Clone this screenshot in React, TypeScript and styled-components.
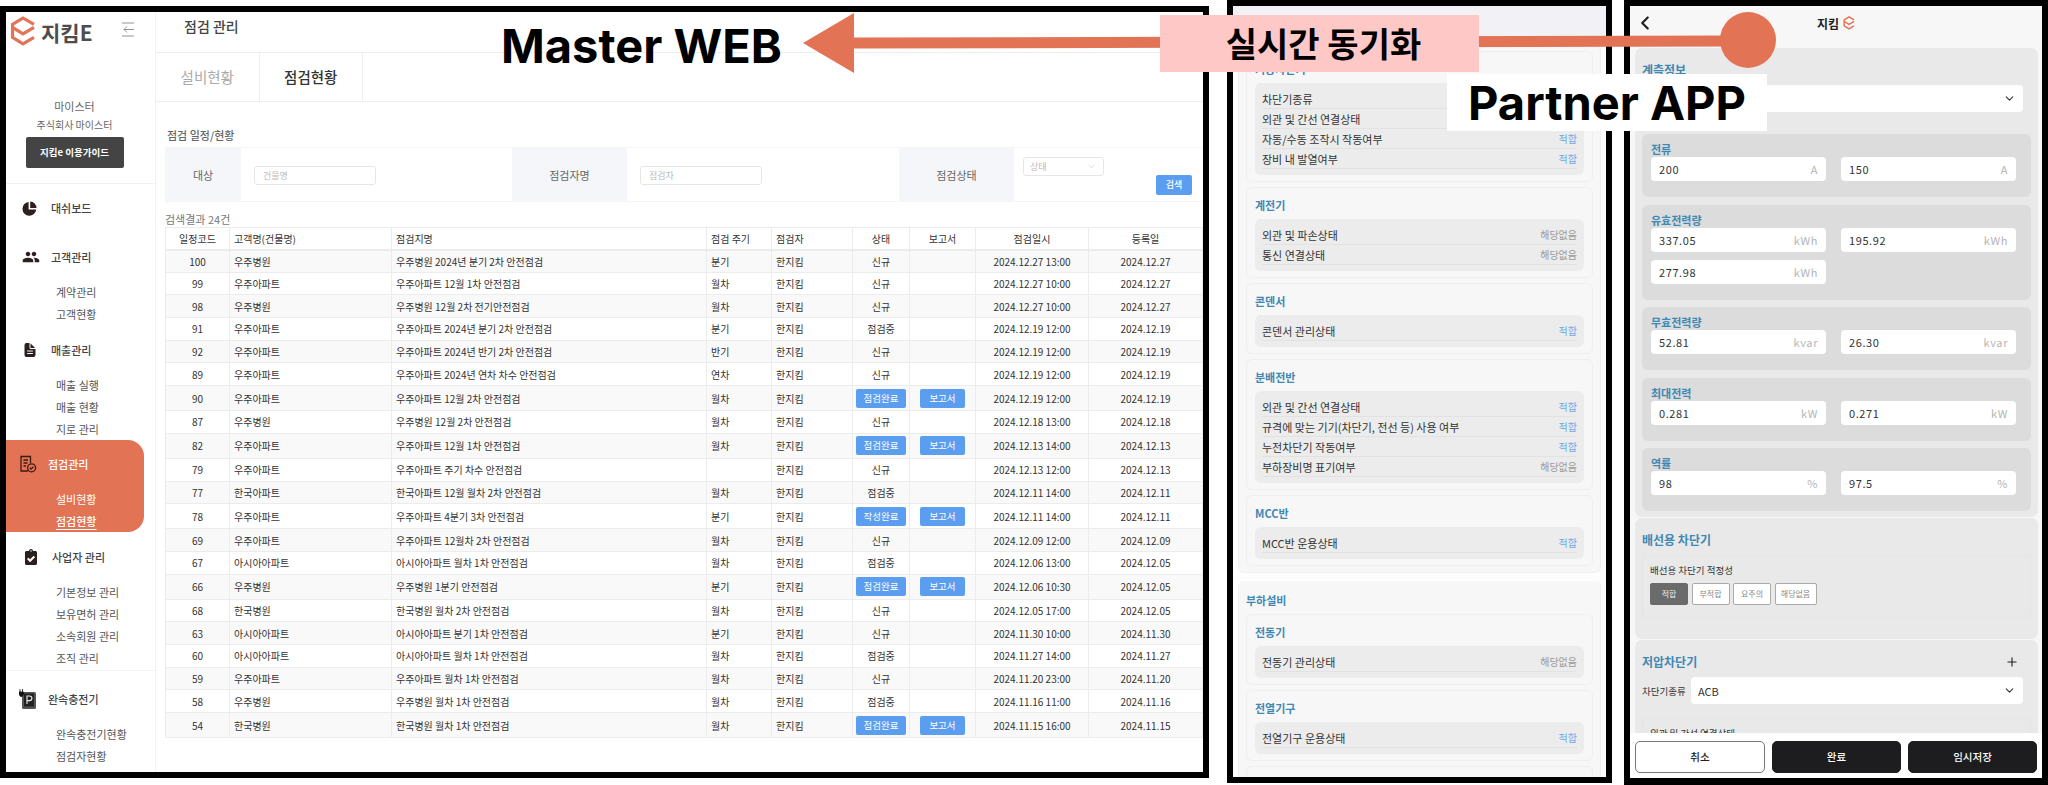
import styled, { createGlobalStyle } from "styled-components";
import { ChevronDown, ChevronLeft, Plus } from "lucide-react";
import { FaClipboardCheck } from "react-icons/fa";
import { IoDocumentText } from "react-icons/io5";
import { MdPeople } from "react-icons/md";

const KR = `"Noto Sans CJK KR", "Noto Sans", sans-serif`;

const GlobalStyle = createGlobalStyle`
  html, body {
    margin: 0;
    padding: 0;
    background: #fff;
  }
  * {
    box-sizing: border-box;
  }
  body {
    font-family: ${KR};
    color: #333;
  }
`;

const ORANGE = "#e37355";

const Logo = ({ size = 26 }: { size?: number }) => (
  <svg width={size} height={size * 1.15} viewBox="0 0 26 30" fill="none" stroke={ORANGE} strokeWidth="3.2">
    <path d="M24 8.5 13 2 2.5 8.5v13L13 28l11-6.5" />
    <path d="M2.5 11.5 13 18l11-6.5" />
  </svg>
);

const CollapseIcon = () => (
  <svg width="14" height="15" viewBox="0 0 14 15" fill="none" stroke="#777" strokeWidth="0.8">
    <path d="M1 1h12M1 14h12M13 7.5H3M6 4.5 3 7.5l3 3" />
  </svg>
);

const PieIcon = () => (
  <svg width="15" height="15" viewBox="0 0 15 15" fill="#2b1f1f">
    <path d="M6.6 1v7.6h7.6A6.9 6.9 0 1 1 6.6 1Z" />
    <path d="M8.2.6a6.6 6.6 0 0 1 6.3 6.4H8.2Z" />
  </svg>
);

const InspectIcon = () => (
  <svg width="18" height="18" viewBox="0 0 18 18" fill="none" stroke="#3a1c14" strokeWidth="1.3">
    <path d="M9 16H2V1.5h9.5V8" />
    <path d="M4.5 5h4.5M4.5 8h4M4.5 11h2.5" />
    <circle cx="12.6" cy="12.8" r="4" />
    <path d="m10.8 12.8 1.3 1.3 2.2-2.3" />
  </svg>
);

const ChargerIcon = () => (
  <svg width="17" height="20" viewBox="0 0 17 20">
    <rect x="3" y="3" width="14" height="17" rx="1.5" fill="#555" />
    <rect x="5" y="4.5" width="10" height="13" fill="#222" />
    <path d="M1 0v3M3.5 0v3M0 3h4.5v2.5L2.2 8 0 5.5Z" fill="#111" stroke="#111" strokeWidth=".8" />
    <path d="M8 15V7h2.6a2.2 2.2 0 0 1 0 4.6H8" fill="none" stroke="#eee" strokeWidth="1.1" />
  </svg>
);

const Stage = styled.div`
  position: relative;
  display: flex;
  align-items: flex-start;
  width: 2048px;
  height: 785px;
  overflow: hidden;
  background: #fff;
`;

const WebFrame = styled.div`
  display: flex;
  flex: none;
  width: 1209px;
  height: 772px;
  margin-top: 6px;
  border: 6px solid #000;
  background: #fff;
  overflow: hidden;
`;

const Sidebar = styled.aside`
  flex: none;
  width: 150px;
  height: 100%;
  border-right: 1px solid #f3f3f3;
`;

const Brand = styled.div`
  display: flex;
  align-items: flex-start;
  height: 50px;
  padding: 4px 0 0 4px;
`;

const BrandName = styled.span`
  margin-left: 5px;
  margin-top: 1px;
  font-size: 21px;
  line-height: 30px;
  font-weight: 700;
  color: #4d4d4d;
`;

const CollapseButton = styled.span`
  margin-left: auto;
  margin-right: 20px;
  margin-top: 2px;
`;

const UserBlock = styled.div`
  display: flex;
  flex-direction: column;
  align-items: center;
  padding: 36px 32px 15px 20px;
  border-bottom: 1px solid #f1f1f1;
`;

const UserName = styled.div`
  font-size: 11px;
  line-height: 16px;
  color: #666;
`;

const UserCompany = styled.div`
  margin-top: 3px;
  font-size: 10px;
  line-height: 16px;
  color: #666;
`;

const GuideButton = styled.div`
  flex: none;
  width: 98px;
  height: 31px;
  margin-top: 4px;
  border-radius: 2px;
  background: #444;
  color: #fff;
  font-size: 9.5px;
  font-weight: 700;
  line-height: 30px;
  text-align: center;
`;

const NavGroup = styled.div<{ $top: number; $active?: boolean; $divided?: boolean }>`
  margin-top: ${(p) => p.$top}px;
  width: ${(p) => (p.$active ? "138px" : "auto")};
  padding: ${(p) => (p.$active ? "12px 0 0" : "0")};
  padding-bottom: ${(p) => (p.$divided ? "1px" : undefined)};
  border-bottom: ${(p) => (p.$divided ? "1px solid #f3f3f3" : "none")};
  background: ${(p) => (p.$active ? ORANGE : "transparent")};
  border-radius: ${(p) => (p.$active ? "0 16px 16px 0" : "0")};
`;

const NavHead = styled.div<{ $inset: number; $active?: boolean }>`
  display: flex;
  align-items: center;
  height: 24px;
  padding-left: ${(p) => p.$inset}px;
  font-size: 11px;
  font-weight: 500;
  color: ${(p) => (p.$active ? "#fff" : "#444")};
`;

const NavIcon = styled.span`
  display: flex;
  align-items: center;
  flex: none;
  width: 29px;
  color: #2b1f1f;
`;

const NavSubList = styled.div`
  margin-top: 12px;
`;

const NavSub = styled.div<{ $active?: boolean; $current?: boolean }>`
  height: 22px;
  padding-left: 50px;
  font-size: 11px;
  line-height: 22px;
  color: ${(p) => (p.$active ? "#fff" : "#555")};
  font-weight: ${(p) => (p.$current ? 500 : 400)};
  text-decoration: ${(p) => (p.$current ? "underline" : "none")};
  text-underline-offset: 3px;
`;

const Main = styled.main`
  flex: 1;
  min-width: 0;
`;

const PageHeader = styled.div`
  height: 41px;
  padding: 4px 0 0 28px;
  border-bottom: 1px solid #eee;
  font-size: 14px;
  line-height: 20px;
  font-weight: 500;
  color: #444;
`;

const Tabs = styled.div`
  display: flex;
  height: 49px;
  border-bottom: 1px solid #eee;
`;

const Tab = styled.div<{ $active?: boolean }>`
  width: 103.5px;
  border-right: 1px solid #eee;
  font-size: 14.5px;
  font-weight: ${(p) => (p.$active ? 500 : 400)};
  line-height: 47px;
  text-align: center;
  color: ${(p) => (p.$active ? "#333" : "#aaa")};
`;

const Content = styled.div`
  padding: 25px 0 0 9px;
`;

const SectionTitle = styled.div`
  padding-left: 2px;
  font-size: 11px;
  line-height: 16px;
  font-weight: 500;
  color: #666;
`;

const FilterBar = styled.div`
  display: grid;
  grid-template-columns: 76px 271px 115px 272px 115px 183px;
  height: 55px;
  margin-top: 4px;
  border-top: 1px solid #f5f5f5;
  border-bottom: 1px solid #f5f5f5;
`;

const FilterLabel = styled.div`
  display: flex;
  align-items: center;
  justify-content: center;
  background: #f4f6f9;
  font-size: 11px;
  color: #666;
`;

const FilterCell = styled.div`
  display: flex;
  align-items: flex-start;
  padding-left: 13px;
`;

const TextInput = styled.div<{ $width: number }>`
  width: ${(p) => p.$width}px;
  height: 19px;
  margin-top: 18px;
  padding-left: 8px;
  border: 1px solid #e6e6e6;
  border-radius: 3px;
  font-size: 9px;
  line-height: 17px;
  color: #bbb;
`;

const SelectCell = styled(FilterCell)`
  padding-left: 9px;
`;

const StateSelect = styled.div`
  display: flex;
  align-items: center;
  justify-content: space-between;
  width: 81px;
  height: 19px;
  margin-top: 9px;
  padding: 0 6px;
  border: 1px solid #e6e6e6;
  border-radius: 3px;
  font-size: 9px;
  color: #bbb;
`;

const SearchButton = styled.div`
  width: 36px;
  height: 20px;
  margin: 27px 5px 0 auto;
  border-radius: 2px;
  background: #5b9ef0;
  color: #fff;
  font-size: 9px;
  font-weight: 500;
  line-height: 20px;
  text-align: center;
`;

const ResultCount = styled.div`
  margin-top: 9px;
  font-size: 11px;
  line-height: 16px;
  color: #777;
`;

const Table = styled.table`
  width: 1037px;
  table-layout: fixed;
  border-collapse: collapse;
  border: 1px solid #e8e8e8;
  font-size: 10px;
  color: #333;
`;

const HeadCell = styled.th<{ $left?: boolean }>`
  height: 22px;
  padding: 0 ${(p) => (p.$left ? "4px" : "0")};
  border: 1px solid #ececec;
  border-bottom-width: 2px;
  font-weight: 400;
  text-align: ${(p) => (p.$left ? "left" : "center")};
`;

const Row = styled.tr<{ $tall: boolean; $odd: boolean }>`
  height: ${(p) => (p.$tall ? "25px" : "22.7px")};
  background: ${(p) => (p.$odd ? "#f9f9f9" : "#fff")};
`;

const Cell = styled.td<{ $left?: boolean }>`
  padding: 0 ${(p) => (p.$left ? "4px" : "0")};
  border: 1px solid #ececec;
  border-bottom-width: 1.5px;
  text-align: ${(p) => (p.$left ? "left" : "center")};
  white-space: nowrap;
`;

const TagButton = styled.span<{ $width: number }>`
  display: inline-block;
  width: ${(p) => p.$width}px;
  height: 19px;
  border-radius: 2px;
  background: #5b9ef0;
  color: #fff;
  font-size: 9.5px;
  line-height: 19px;
  text-align: center;
  vertical-align: middle;
`;

const PhoneOne = styled.div`
  flex: none;
  width: 385px;
  height: 783px;
  margin-left: 18px;
  border: 6px solid #000;
  background: #fdfdfd;
  overflow: hidden;
`;

const PhoneOneTop = styled.div`
  height: 39px;
  background: #f1f1f6;
`;

const PhoneOneBody = styled.div`
  padding: 0 5px;
`;

const OuterCard = styled.div<{ $top?: number }>`
  display: flex;
  flex-direction: column;
  gap: 5px;
  margin-top: ${(p) => p.$top ?? 0}px;
  padding: 6px 7px 6px;
  border: 1px solid #f0f0f0;
  border-top: none;
  border-radius: 6px;
  background: #f7f7f8;
`;

const OuterTitle = styled.div`
  padding-top: 6px;
  margin-bottom: 2px;
  font-size: 11px;
  font-weight: 700;
  line-height: 14px;
  color: #3f88b3;
`;

const CheckCard = styled.div<{ $blank?: boolean }>`
  min-height: ${(p) => (p.$blank ? "40px" : "0")};
  padding: 10px 8px 6px;
  border: 1px solid #efefef;
  border-radius: 6px;
  background: #f7f7f7;
`;

const CardTitle = styled.div`
  margin-bottom: 7px;
  font-size: 11px;
  font-weight: 700;
  line-height: 14px;
  color: #3f88b3;
`;

const CheckList = styled.div`
  padding: 6px 7px;
  border-radius: 6px;
  background: #ececec;
`;

const CheckRow = styled.div`
  display: flex;
  align-items: center;
  justify-content: space-between;
  height: 20px;
  border-bottom: 1px solid #e2e2e2;
  font-size: 11px;
  color: #333;
`;

const CheckResult = styled.span<{ $fit: boolean }>`
  font-size: 10px;
  color: ${(p) => (p.$fit ? "#6ba8ea" : "#9a9a9a")};
`;

const PhoneTwo = styled.div`
  display: flex;
  flex-direction: column;
  flex: none;
  width: 424px;
  height: 785px;
  margin-left: 12px;
  border: 6px solid #000;
  border-bottom-width: 7px;
  background: #fff;
  overflow: hidden;
`;

const AppBar = styled.div`
  position: relative;
  display: flex;
  align-items: center;
  justify-content: center;
  flex: none;
  gap: 4px;
  height: 42px;
  padding-bottom: 8px;
  background: #f7f7f7;
  font-size: 12px;
  font-weight: 700;
  color: #222;
`;

const BackIcon = styled.span`
  position: absolute;
  left: 4px;
  top: 6px;
  color: #222;
`;

const AppBody = styled.div`
  display: flex;
  flex-direction: column;
  flex: 1;
  gap: 1px;
  min-height: 0;
  padding: 0 4px 0 5px;
  overflow: hidden;
  background: #f7f7f7;
`;

const FormCard = styled.div<{ $bottom: number }>`
  flex: none;
  padding: 15px 7px ${(p) => p.$bottom}px;
  border-radius: 7px;
  background: #e9e9e9;
`;

const FormTitle = styled.div`
  display: flex;
  align-items: center;
  justify-content: space-between;
  padding-right: 12px;
  font-size: 12px;
  font-weight: 700;
  line-height: 14px;
  color: #3f88b3;
`;

const FieldRow = styled.div`
  display: flex;
  align-items: center;
  margin-top: 8px;
  font-size: 9.5px;
  color: #333;
`;

const FieldLabel = styled.span`
  flex: none;
  width: 49px;
  white-space: nowrap;
`;

const FieldSelect = styled.div`
  display: flex;
  align-items: center;
  justify-content: space-between;
  width: 332px;
  height: 27px;
  padding: 0 7px;
  border-radius: 4px;
  background: #fff;
  font-size: 11px;
  color: #333;
`;

const MeasureList = styled.div`
  display: flex;
  flex-direction: column;
  gap: 7.5px;
  margin-top: 22px;
`;

const MeasureGroup = styled.div`
  padding: 8px 15px 16px 9px;
  border-radius: 6px;
  background: #dcdcdc;
`;

const MeasureTitle = styled.div`
  margin-bottom: 1px;
  font-size: 11px;
  font-weight: 700;
  line-height: 14px;
  color: #3f88b3;
`;

const MeasureGrid = styled.div`
  display: grid;
  grid-template-columns: 175px 175px;
  gap: 8px 15px;
`;

const MeasureInput = styled.div`
  display: flex;
  align-items: center;
  justify-content: space-between;
  height: 24px;
  padding: 0 8px;
  border-radius: 4px;
  background: #fff;
  font-size: 11px;
  letter-spacing: 0.6px;
  color: #333;
`;

const Unit = styled.span`
  color: #b5b5b5;
`;

const CheckBox = styled.div<{ $top: number }>`
  height: 63px;
  margin-top: ${(p) => p.$top}px;
  padding: 7px;
  border: 1px solid #e5e5e5;
  border-radius: 4px;
  font-size: 9.5px;
  line-height: 14px;
  color: #333;
`;

const ChoiceRow = styled.div`
  display: flex;
  gap: 3.5px;
  margin-top: 6px;
`;

const Choice = styled.div<{ $on?: boolean; $wide?: boolean }>`
  width: ${(p) => (p.$wide ? "42px" : "38px")};
  height: 22px;
  border: 1px solid ${(p) => (p.$on ? "#6b6b6b" : "#aaa")};
  border-radius: 2px;
  background: ${(p) => (p.$on ? "#6b6b6b" : "#fff")};
  color: ${(p) => (p.$on ? "#eee" : "#888")};
  font-size: 8px;
  line-height: 20px;
  text-align: center;
`;

const ActionBar = styled.div`
  display: grid;
  grid-template-columns: 130px 129px 129px;
  flex: none;
  gap: 7px;
  height: 45px;
  padding: 8px 0 0 5px;
  background: #fff;
`;

const ActionButton = styled.div<{ $dark?: boolean }>`
  height: 32px;
  border: 1px solid ${(p) => (p.$dark ? "#1d1d1f" : "#777")};
  border-radius: 5px;
  background: ${(p) => (p.$dark ? "#1d1d1f" : "#fff")};
  color: ${(p) => (p.$dark ? "#fff" : "#222")};
  font-size: 10.5px;
  font-weight: 500;
  line-height: 30px;
  text-align: center;
`;

const SyncLine = styled.svg`
  position: absolute;
  left: 803px;
  top: 10px;
  z-index: 2;
`;

const Headline = styled.div`
  position: absolute;
  left: 501px;
  top: 17px;
  z-index: 3;
  font-family: Inter, sans-serif;
  font-size: 47px;
  font-weight: 700;
  line-height: 58px;
  color: #000;
  white-space: nowrap;
`;

const SyncBadge = styled.div`
  position: absolute;
  left: 1160px;
  top: 15px;
  z-index: 3;
  width: 319px;
  height: 57px;
  padding-left: 8px;
  background: #fdc8c6;
  font-size: 34px;
  font-weight: 700;
  line-height: 55px;
  text-align: center;
  color: #000;
`;

const PartnerBadge = styled.div`
  position: absolute;
  left: 1447px;
  top: 74px;
  z-index: 3;
  width: 320px;
  height: 57px;
  background: #fff;
  font-family: Inter, sans-serif;
  font-size: 47px;
  font-weight: 700;
  line-height: 58px;
  text-align: center;
  color: #000;
`;

type Inspection = {
  code: number;
  client: string;
  name: string;
  cycle: string;
  status: string;
  report?: boolean;
  at: string;
  reg: string;
};

const inspections: Inspection[] = [
  { code: 100, client: "우주병원", name: "우주병원 2024년 분기 2차 안전점검", cycle: "분기", status: "신규", at: "2024.12.27 13:00", reg: "2024.12.27" },
  { code: 99, client: "우주아파트", name: "우주아파트 12월 1차 안전점검", cycle: "월차", status: "신규", at: "2024.12.27 10:00", reg: "2024.12.27" },
  { code: 98, client: "우주병원", name: "우주병원 12월 2차 전기안전점검", cycle: "월차", status: "신규", at: "2024.12.27 10:00", reg: "2024.12.27" },
  { code: 91, client: "우주아파트", name: "우주아파트 2024년 분기 2차 안전점검", cycle: "분기", status: "점검중", at: "2024.12.19 12:00", reg: "2024.12.19" },
  { code: 92, client: "우주아파트", name: "우주아파트 2024년 반기 2차 안전점검", cycle: "반기", status: "신규", at: "2024.12.19 12:00", reg: "2024.12.19" },
  { code: 89, client: "우주아파트", name: "우주아파트 2024년 연차 차수 안전점검", cycle: "연차", status: "신규", at: "2024.12.19 12:00", reg: "2024.12.19" },
  { code: 90, client: "우주아파트", name: "우주아파트 12월 2차 안전점검", cycle: "월차", status: "점검완료", report: true, at: "2024.12.19 12:00", reg: "2024.12.19" },
  { code: 87, client: "우주병원", name: "우주병원 12월 2차 안전점검", cycle: "월차", status: "신규", at: "2024.12.18 13:00", reg: "2024.12.18" },
  { code: 82, client: "우주아파트", name: "우주아파트 12월 1차 안전점검", cycle: "월차", status: "점검완료", report: true, at: "2024.12.13 14:00", reg: "2024.12.13" },
  { code: 79, client: "우주아파트", name: "우주아파트 주기 차수 안전점검", cycle: "", status: "신규", at: "2024.12.13 12:00", reg: "2024.12.13" },
  { code: 77, client: "한국아파트", name: "한국아파트 12월 월차 2차 안전점검", cycle: "월차", status: "점검중", at: "2024.12.11 14:00", reg: "2024.12.11" },
  { code: 78, client: "우주아파트", name: "우주아파트 4분기 3차 안전점검", cycle: "분기", status: "작성완료", report: true, at: "2024.12.11 14:00", reg: "2024.12.11" },
  { code: 69, client: "우주아파트", name: "우주아파트 12월차 2차 안전점검", cycle: "월차", status: "신규", at: "2024.12.09 12:00", reg: "2024.12.09" },
  { code: 67, client: "아시아아파트", name: "아시아아파트 월차 1차 안전점검", cycle: "월차", status: "점검중", at: "2024.12.06 13:00", reg: "2024.12.05" },
  { code: 66, client: "우주병원", name: "우주병원 1분기 안전점검", cycle: "분기", status: "점검완료", report: true, at: "2024.12.06 10:30", reg: "2024.12.05" },
  { code: 68, client: "한국병원", name: "한국병원 월차 2차 안전점검", cycle: "월차", status: "신규", at: "2024.12.05 17:00", reg: "2024.12.05" },
  { code: 63, client: "아시아아파트", name: "아시아아파트 분기 1차 안전점검", cycle: "분기", status: "신규", at: "2024.11.30 10:00", reg: "2024.11.30" },
  { code: 60, client: "아시아아파트", name: "아시아아파트 월차 1차 안전점검", cycle: "월차", status: "점검중", at: "2024.11.27 14:00", reg: "2024.11.27" },
  { code: 59, client: "우주아파트", name: "우주아파트 월차 1차 안전점검", cycle: "월차", status: "신규", at: "2024.11.20 23:00", reg: "2024.11.20" },
  { code: 58, client: "우주병원", name: "우주병원 월차 1차 안전점검", cycle: "월차", status: "점검중", at: "2024.11.16 11:00", reg: "2024.11.16" },
  { code: 54, client: "한국병원", name: "한국병원 월차 1차 안전점검", cycle: "월차", status: "점검완료", report: true, at: "2024.11.15 16:00", reg: "2024.11.15" },
];

const columnWidths = [64, 162, 315, 65, 81, 57, 66, 113, 114];

const FIT = "적합";
const NONE = "해당없음";

const checkCards: { title: string; rows: [string, string][] }[] = [
  {
    title: "기중차단기",
    rows: [
      // the first two results sit behind the Partner APP badge
      ["차단기종류", ""],
      ["외관 및 간선 연결상태", ""],
      ["자동/수동 조작시 작동여부", FIT],
      ["장비 내 발열여부", FIT],
    ],
  },
  {
    title: "계전기",
    rows: [
      ["외관 및 파손상태", NONE],
      ["통신 연결상태", NONE],
    ],
  },
  { title: "콘덴서", rows: [["콘덴서 관리상태", FIT]] },
  {
    title: "분배전반",
    rows: [
      ["외관 및 간선 연결상태", FIT],
      ["규격에 맞는 기기(차단기, 전선 등) 사용 여부", FIT],
      ["누전차단기 작동여부", FIT],
      ["부하장비명 표기여부", NONE],
    ],
  },
  { title: "MCC반", rows: [["MCC반 운용상태", FIT]] },
];

const loadCards: { title: string; rows: [string, string][] }[] = [
  { title: "전동기", rows: [["전동기 관리상태", NONE]] },
  { title: "전열기구", rows: [["전열기구 운용상태", FIT]] },
];

const measures: { title: string; unit: string; values: string[] }[] = [
  { title: "전류", unit: "A", values: ["200", "150"] },
  { title: "유효전력량", unit: "kWh", values: ["337.05", "195.92", "277.98"] },
  { title: "무효전력량", unit: "kvar", values: ["52.81", "26.30"] },
  { title: "최대전력", unit: "kW", values: ["0.281", "0.271"] },
  { title: "역률", unit: "%", values: ["98", "97.5"] },
];

const CheckCardView = ({ title, rows }: { title: string; rows: [string, string][] }) => (
  <CheckCard>
    <CardTitle>{title}</CardTitle>
    <CheckList>
      {rows.map(([label, result]) => (
        <CheckRow key={label}>
          {label}
          <CheckResult $fit={result === FIT}>{result}</CheckResult>
        </CheckRow>
      ))}
    </CheckList>
  </CheckCard>
);

const SidebarNav = () => (
  <Sidebar>
    <Brand>
      <Logo />
      <BrandName>지킴E</BrandName>
      <CollapseButton>
        <CollapseIcon />
      </CollapseButton>
    </Brand>
    <UserBlock>
      <UserName>마이스터</UserName>
      <UserCompany>주식회사 마이스터</UserCompany>
      <GuideButton>지킴e 이용가이드</GuideButton>
    </UserBlock>
    <NavGroup $top={12}>
      <NavHead $inset={16}>
        <NavIcon>
          <PieIcon />
        </NavIcon>
        대쉬보드
      </NavHead>
    </NavGroup>
    <NavGroup $top={25}>
      <NavHead $inset={16}>
        <NavIcon>
          <MdPeople size={18} />
        </NavIcon>
        고객관리
      </NavHead>
      <NavSubList>
        <NavSub>계약관리</NavSub>
        <NavSub>고객현황</NavSub>
      </NavSubList>
    </NavGroup>
    <NavGroup $top={13}>
      <NavHead $inset={16}>
        <NavIcon>
          <IoDocumentText size={16} />
        </NavIcon>
        매출관리
      </NavHead>
      <NavSubList>
        <NavSub>매출 실행</NavSub>
        <NavSub>매출 현황</NavSub>
        <NavSub>지로 관리</NavSub>
      </NavSubList>
    </NavGroup>
    <NavGroup $top={0} $active>
      <NavHead $inset={13} $active>
        <NavIcon>
          <InspectIcon />
        </NavIcon>
        점검관리
      </NavHead>
      <NavSubList>
        <NavSub $active>설비현황</NavSub>
        <NavSub $active $current>
          점검현황
        </NavSub>
      </NavSubList>
    </NavGroup>
    <NavGroup $top={13} $divided>
      <NavHead $inset={17}>
        <NavIcon>
          <FaClipboardCheck size={16} />
        </NavIcon>
        사업자 관리
      </NavHead>
      <NavSubList>
        <NavSub>기본정보 관리</NavSub>
        <NavSub>보유면허 관리</NavSub>
        <NavSub>소속회원 관리</NavSub>
        <NavSub>조직 관리</NavSub>
      </NavSubList>
    </NavGroup>
    <NavGroup $top={16}>
      <NavHead $inset={13}>
        <NavIcon>
          <ChargerIcon />
        </NavIcon>
        완속충전기
      </NavHead>
      <NavSubList>
        <NavSub>완속충전기현황</NavSub>
        <NavSub>점검자현황</NavSub>
      </NavSubList>
    </NavGroup>
  </Sidebar>
);

const InspectionTable = () => (
  <Table>
    <colgroup>
      {columnWidths.map((w, i) => (
        <col key={i} width={w} />
      ))}
    </colgroup>
    <thead>
      <tr>
        <HeadCell>일정코드</HeadCell>
        <HeadCell $left>고객명(건물명)</HeadCell>
        <HeadCell $left>점검지명</HeadCell>
        <HeadCell $left>점검 주기</HeadCell>
        <HeadCell $left>점검자</HeadCell>
        <HeadCell>상태</HeadCell>
        <HeadCell>보고서</HeadCell>
        <HeadCell>점검일시</HeadCell>
        <HeadCell>등록일</HeadCell>
      </tr>
    </thead>
    <tbody>
      {inspections.map((row, i) => (
        <Row key={row.code} $tall={!!row.report} $odd={i % 2 === 0}>
          <Cell>{row.code}</Cell>
          <Cell $left>{row.client}</Cell>
          <Cell $left>{row.name}</Cell>
          <Cell $left>{row.cycle}</Cell>
          <Cell $left>한지킴</Cell>
          <Cell>{row.report ? <TagButton $width={50}>{row.status}</TagButton> : row.status}</Cell>
          <Cell>{row.report && <TagButton $width={45}>보고서</TagButton>}</Cell>
          <Cell>{row.at}</Cell>
          <Cell>{row.reg}</Cell>
        </Row>
      ))}
    </tbody>
  </Table>
);

const App = () => {
  return (
    <Stage>
      <GlobalStyle />
      <WebFrame>
        <SidebarNav />
        <Main>
          <PageHeader>점검 관리</PageHeader>
          <Tabs>
            <Tab>설비현황</Tab>
            <Tab $active>점검현황</Tab>
          </Tabs>
          <Content>
            <SectionTitle>점검 일정/현황</SectionTitle>
            <FilterBar>
              <FilterLabel>대상</FilterLabel>
              <FilterCell>
                <TextInput $width={122}>건물명</TextInput>
              </FilterCell>
              <FilterLabel>점검자명</FilterLabel>
              <FilterCell>
                <TextInput $width={122}>점검자</TextInput>
              </FilterCell>
              <FilterLabel>점검상태</FilterLabel>
              <SelectCell>
                <StateSelect>
                  상태
                  <ChevronDown size={11} strokeWidth={1.2} />
                </StateSelect>
                <SearchButton>검색</SearchButton>
              </SelectCell>
            </FilterBar>
            <ResultCount>검색결과 24건</ResultCount>
            <InspectionTable />
          </Content>
        </Main>
      </WebFrame>

      <PhoneOne>
        <PhoneOneTop />
        <PhoneOneBody>
          <OuterCard>
            {checkCards.map((card) => (
              <CheckCardView key={card.title} {...card} />
            ))}
          </OuterCard>
          <OuterCard $top={8}>
            <OuterTitle>부하설비</OuterTitle>
            {loadCards.map((card) => (
              <CheckCardView key={card.title} {...card} />
            ))}
            <CheckCard $blank />
          </OuterCard>
        </PhoneOneBody>
      </PhoneOne>

      <PhoneTwo>
        <AppBar>
          <BackIcon>
            <ChevronLeft size={22} strokeWidth={2.4} />
          </BackIcon>
          지킴
          <Logo size={12} />
        </AppBar>
        <AppBody>
          <FormCard $bottom={6}>
            <FormTitle>계측정보</FormTitle>
            <FieldRow>
              <FieldLabel />
              <FieldSelect>
                <span />
                <ChevronDown size={13} />
              </FieldSelect>
            </FieldRow>
            <MeasureList>
              {measures.map((m) => (
                <MeasureGroup key={m.title}>
                  <MeasureTitle>{m.title}</MeasureTitle>
                  <MeasureGrid>
                    {m.values.map((v) => (
                      <MeasureInput key={v}>
                        {v}
                        <Unit>{m.unit}</Unit>
                      </MeasureInput>
                    ))}
                  </MeasureGrid>
                </MeasureGroup>
              ))}
            </MeasureList>
          </FormCard>
          <FormCard $bottom={21}>
            <FormTitle>배선용 차단기</FormTitle>
            <CheckBox $top={8}>
              배선용 차단기 적정성
              <ChoiceRow>
                <Choice $on>적합</Choice>
                <Choice>부적합</Choice>
                <Choice>요주의</Choice>
                <Choice $wide>해당없음</Choice>
              </ChoiceRow>
            </CheckBox>
          </FormCard>
          <FormCard $bottom={21}>
            <FormTitle>
              저압차단기
              <Plus size={14} color="#222" />
            </FormTitle>
            <FieldRow>
              <FieldLabel>차단기종류</FieldLabel>
              <FieldSelect>
                ACB
                <ChevronDown size={13} />
              </FieldSelect>
            </FieldRow>
            <CheckBox $top={14}>외관 및 간선 연결상태</CheckBox>
          </FormCard>
        </AppBody>
        <ActionBar>
          <ActionButton>취소</ActionButton>
          <ActionButton $dark>완료</ActionButton>
          <ActionButton $dark>임시저장</ActionButton>
        </ActionBar>
      </PhoneTwo>

      <SyncLine width="973" height="65" viewBox="0 0 973 65" fill={ORANGE}>
        <path d="M0 33 51 3v24.5l880-2v11l-880 2V63Z" />
        <circle cx="945" cy="30" r="28" />
      </SyncLine>
      <Headline>Master WEB</Headline>
      <SyncBadge>실시간 동기화</SyncBadge>
      <PartnerBadge>Partner APP</PartnerBadge>
    </Stage>
  );
};

export default App;
